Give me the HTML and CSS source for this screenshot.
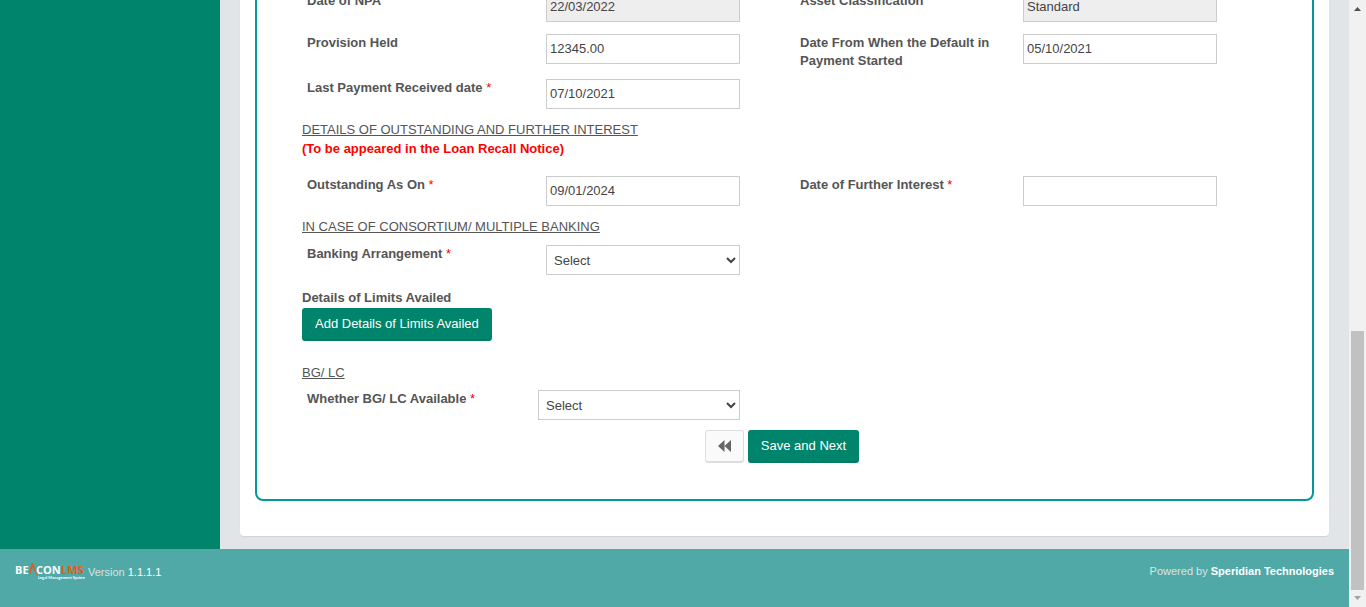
FILE: index.html
```html
<!DOCTYPE html>
<html lang="en">
<head>
<meta charset="utf-8">
<title>BeaconLMS</title>
<link rel="stylesheet" href="styles.css">
</head>
<body>
<div class="viewport">
  <div class="page">
    <div class="main">
      <aside class="sidebar"></aside>
      <main class="content">
        <section class="card">
          <form class="panel">
            <div class="row">
              <label for="npa">Date of NPA</label>
              <input id="npa" class="field" type="text" value="22/03/2022" disabled>
              <label class="second" for="asset">Asset Classification</label>
              <input id="asset" class="field" type="text" value="Standard" disabled>
            </div>
            <div class="row">
              <label for="provision">Provision Held</label>
              <input id="provision" class="field" type="text" value="12345.00">
              <label class="second" for="default-date">Date From When the Default in Payment Started</label>
              <input id="default-date" class="field" type="text" value="05/10/2021">
            </div>
            <div class="row">
              <label for="last-payment">Last Payment Received date <span class="required">*</span></label>
              <input id="last-payment" class="field" type="text" value="07/10/2021">
            </div>
            <h2 class="heading">DETAILS OF OUTSTANDING AND FURTHER INTEREST</h2>
            <p class="notice">(To be appeared in the Loan Recall Notice)</p>
            <div class="row">
              <label for="outstanding">Outstanding As On <span class="required">*</span></label>
              <input id="outstanding" class="field" type="text" value="09/01/2024">
              <label class="second" for="further">Date of Further Interest <span class="required">*</span></label>
              <input id="further" class="field" type="text">
            </div>
            <h2 class="heading">IN CASE OF CONSORTIUM/ MULTIPLE BANKING</h2>
            <div class="row">
              <label for="banking">Banking Arrangement <span class="required">*</span></label>
              <select id="banking" class="field"><option>Select</option></select>
            </div>
            <h3 class="subheading">Details of Limits Availed</h3>
            <button class="button primary" type="button">Add Details of Limits Availed</button>
            <h2 class="heading bglc">BG/ LC</h2>
            <div class="row wide">
              <label for="bg">Whether BG/ LC Available <span class="required">*</span></label>
              <select id="bg" class="field"><option>Select</option></select>
            </div>
            <div class="actions">
              <button class="button back" type="button" aria-label="Back">
                <svg width="13" height="12" viewBox="0 0 13 12"><path d="M6.5 0v12L0 6zM13 0v12L6.5 6z" fill="#666"/></svg>
              </button>
              <button class="button primary" type="button">Save and Next</button>
            </div>
          </form>
        </section>
      </main>
    </div>
    <footer class="footer">
      <div class="brand">
        <svg class="logo" width="70" height="18" viewBox="0 0 70 18" role="img" aria-label="BeaconLMS Legal Management System">
          <text class="logo-name" x="0" y="11">BE</text>
          <path d="M14 11L16.500 0H18L23.500 15L17.300 4L15.500 11z" fill="#e85a10"/>
          <text class="logo-name" x="21" y="11">CON</text>
          <text class="logo-name accent" x="46" y="11">LMS</text>
          <text class="logo-tag" x="23" y="16">Legal Management System</text>
        </svg>
        <span>Version <span class="number">1.1.1.1</span></span>
      </div>
      <div class="credit">Powered by <strong>Speridian Technologies</strong></div>
    </footer>
  </div>
  <div class="scrollbar">
    <svg width="17" height="17" viewBox="0 0 17 17"><path d="M5 11L8.500 7L12 11z" fill="#505050"/></svg>
    <div class="track"><div class="thumb"></div></div>
    <svg width="17" height="17" viewBox="0 0 17 17"><path d="M5 6L8.500 10L12 6z" fill="#a3a3a3"/></svg>
  </div>
</div>
</body>
</html>
```
FILE: styles.css
```css
* { box-sizing: border-box; }

body {
  margin: 0;
  font: 13px/18px "Liberation Sans", Arial, sans-serif;
  color: #555;
}

.viewport { display: flex; height: 100vh; overflow: hidden; }

/* The end of the page is in view, its start runs off the top. */
.page {
  flex: 1;
  min-width: 0;
  display: flex;
  flex-direction: column;
  justify-content: flex-end;
  overflow: hidden;
}

.main { display: flex; flex-shrink: 0; }
.sidebar { flex: 0 0 220px; background: #00846b; }
.content { flex: 1; min-width: 0; padding: 0 20px 13px; background: #e1e5e8; }

.card {
  padding: 0 15px 35px;
  background: #fff;
  border-radius: 4px;
  box-shadow: 0 1px 1px rgba(0, 0, 0, .08);
}

.panel {
  padding: 24px 45px 36px;
  border: 2px solid #009999;
  border-radius: 8px;
}

.row {
  display: grid;
  grid-template-columns: 239fr 194fr 60fr 223fr 194fr 50fr;
  align-items: start;
  padding-left: 5px;
  margin-bottom: 9px;
}
.row:first-child { margin-bottom: 12px; }
.row.wide { grid-template-columns: 231fr 202fr 527fr; margin-bottom: 10px; }
.row label { font-weight: bold; padding-right: 24px; }
.row .second { grid-column: 4; }

.required { color: #f00; font-weight: normal; }

.field {
  width: 100%;
  height: 30px;
  margin: 0;
  padding: 0 3px 1px;
  border: 1px solid #ccc;
  border-radius: 0;
  background-color: #fff;
  color: #444;
  font: inherit;
}
select.field { padding-bottom: 0; }
.field:disabled { background: #eee; }

.heading, .subheading, .notice { margin: 0; font-size: 13px; line-height: 18px; font-weight: bold; }
.heading { margin: 12px 0 9px; font-weight: normal; text-decoration: underline; }
.heading + .notice { margin: -8px 0 18px; }
.notice { color: #f00; }
.subheading { margin: 14px 0 1px; }
.bglc { margin: 23px 0 8px; }

.button {
  height: 33px;
  padding: 0 12px;
  border: 1px solid #00846b;
  border-bottom: 2px solid #007a63;
  border-radius: 3px;
  font: inherit;
}
.primary { background: #00846b; color: #fff; }
.back { border-color: #ddd; background: #fafafa; }
.back svg { display: block; }

.actions { display: flex; justify-content: center; gap: 4px; padding-right: 5px; }

.footer {
  flex-shrink: 0;
  display: flex;
  justify-content: space-between;
  height: 58px;
  padding: 14px 15px;
  background: #50a9a7;
  color: #dde2e2;
  font-size: 11px;
}
.footer strong { color: #fff; }
.credit { line-height: 16px; }
.brand { display: flex; gap: 3px; }
.number { color: #fff; }
.logo-name { font: bold 11px "Open Sans", sans-serif; fill: #fff; }
.logo-name.accent { fill: #e85a10; }
.logo-tag { font: bold 4px Lato, sans-serif; fill: #fff; }

.scrollbar { flex: 0 0 17px; display: flex; flex-direction: column; background: #f1f1f1; }
.track { flex: 1; display: flex; flex-direction: column; justify-content: flex-end; padding: 0 2px; }
.thumb { height: 45.2%; background: #c1c1c1; }
```
